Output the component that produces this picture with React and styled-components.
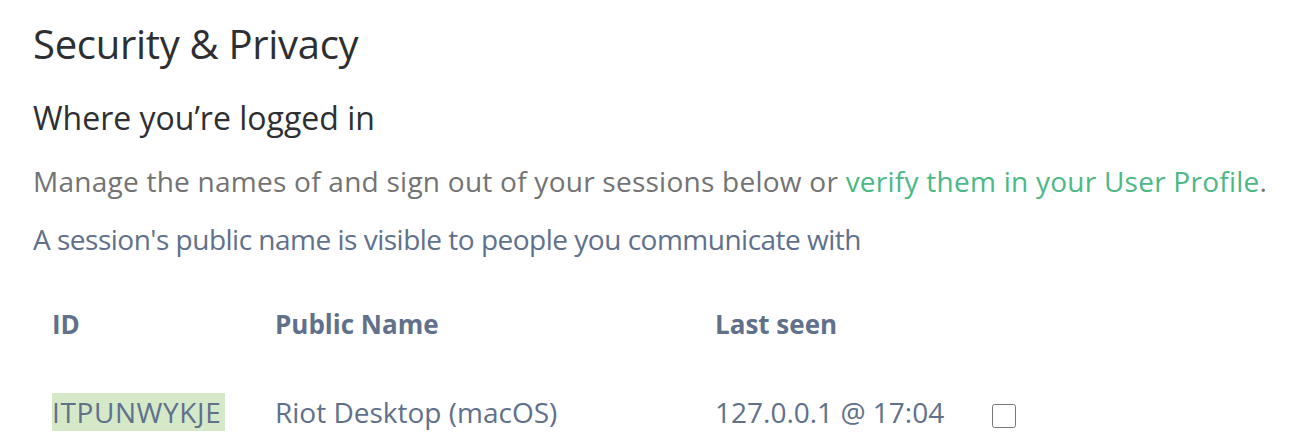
import React from "react";
import styled, { createGlobalStyle } from "styled-components";

const GlobalStyle = createGlobalStyle`
  body {
    margin: 0;
    background: #ffffff;
    font-family: "Open Sans", "Noto Sans", sans-serif;
  }
`;

const columns = [
  { label: "ID", width: 223 },
  { label: "Public Name", width: 440 },
  { label: "Last seen", width: 277 },
  { label: "", width: 60 },
];

const sessions = [
  { id: "ITPUNWYKJE", name: "Riot Desktop (macOS)", lastSeen: "127.0.0.1 @ 17:04", current: true },
];

const App = () => {
  return (
    <Page>
      <GlobalStyle />
      <Title>Security &amp; Privacy</Title>
      <Section>
        <Subheading>Where you’re logged in</Subheading>
        <Description>
          Manage the names of and sign out of your sessions below or{" "}
          <Link href="#">verify them in your User Profile</Link>.
        </Description>
        <Hint>A session's public name is visible to people you communicate with</Hint>
        <Table>
          <thead>
            <tr>
              {columns.map((c) => (
                <HeadCell key={c.label} $width={c.width}>
                  {c.label}
                </HeadCell>
              ))}
            </tr>
          </thead>
          <tbody>
            {sessions.map((s) => (
              <tr key={s.id}>
                <Cell>
                  <DeviceId $current={s.current}>{s.id}</DeviceId>
                </Cell>
                <Cell>{s.name}</Cell>
                <Cell>{s.lastSeen}</Cell>
                <Cell>
                  <Check type="checkbox" />
                </Cell>
              </tr>
            ))}
          </tbody>
        </Table>
      </Section>
    </Page>
  );
};

const Page = styled.main`
  padding: 20px 0 0 33px;
`;

const Title = styled.h1`
  margin: 0;
  font-size: 40px;
  font-weight: 500;
  line-height: 48px;
  letter-spacing: -0.3px;
  color: #2e2f32;
`;

const Section = styled.section`
  margin-top: 30px;
`;

const Subheading = styled.h3`
  margin: 0;
  font-size: 32px;
  font-weight: 500;
  line-height: 40px;
  color: #2e2f32;
`;

const Description = styled.p`
  margin: 25px 0 0;
  font-size: 28px;
  line-height: 36px;
  letter-spacing: 0.25px;
  white-space: nowrap;
  color: #737373;
`;

const Link = styled.a`
  color: #4bb886;
  text-decoration: none;
`;

const Hint = styled.p`
  margin: 22px 0 0;
  font-size: 28px;
  line-height: 36px;
  letter-spacing: -0.5px;
  color: #61708b;
`;

const Table = styled.table`
  margin-top: 49px;
  margin-left: 19px;
  border-collapse: collapse;
  table-layout: fixed;
  color: #61708b;
`;

const HeadCell = styled.th`
  width: ${(p) => p.$width}px;
  padding: 0 0 51px 0;
  text-align: left;
  font-size: 26px;
  font-weight: 700;
  line-height: 36px;
  white-space: nowrap;
`;

const Cell = styled.td`
  padding: 0;
  font-size: 28px;
  line-height: 38px;
  white-space: nowrap;
  vertical-align: middle;
`;

const DeviceId = styled.span`
  display: inline-block;
  padding-right: 4px;
  letter-spacing: 0.6px;
  background: ${(p) => (p.$current ? "#d5e9c9" : "transparent")};
`;

const Check = styled.input`
  width: 24px;
  height: 24px;
  margin: 0;
  vertical-align: middle;
`;

export default App;
